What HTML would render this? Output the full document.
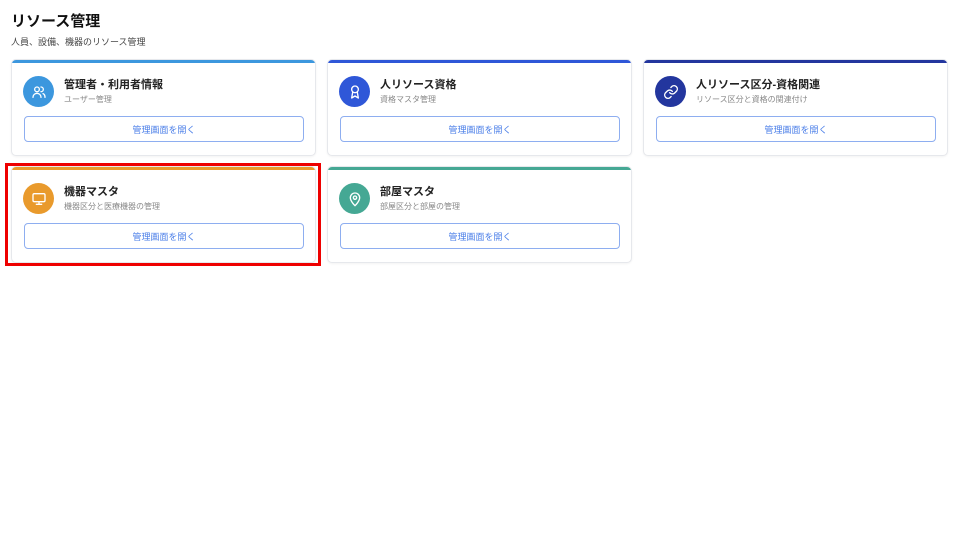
<!DOCTYPE html>
<html><head><meta charset="utf-8"><style>
*{box-sizing:border-box;margin:0;padding:0}
body{width:960px;height:540px;background:#fff;font-family:"Liberation Sans","Noto Sans CJK JP",sans-serif;position:relative;overflow:hidden;color:#1f2329}
h1{position:absolute;left:11px;top:10px;font-size:15px;font-weight:bold;color:#111}
.sub{position:absolute;left:11px;top:35px;font-size:9px;color:#444}
.card{position:absolute;width:305px;height:97px;background:#fff;border:1px solid #e6e8ec;border-radius:5px;box-shadow:0 1px 2px rgba(0,0,0,.05);overflow:hidden}
.bar{position:absolute;left:0;top:0;right:0;height:3px}
.ic{position:absolute;left:11px;top:16px;width:31px;height:31px;border-radius:50%;display:flex;align-items:center;justify-content:center}
.t{position:absolute;left:52px;top:16px;font-size:11px;font-weight:bold;color:#222}
.s{position:absolute;left:52px;top:34px;font-size:8px;color:#888}
.btn{position:absolute;left:12px;top:56px;width:280px;height:26px;border:1px solid #8eaef0;border-radius:4px;display:flex;align-items:center;justify-content:center;font-size:9px;color:#4a7ee8}
.red{position:absolute;left:5px;top:163px;width:316px;height:103px;border:3px solid #e00;z-index:2}
</style></head><body>
<h1>リソース管理</h1>
<div class="sub">人員、設備、機器のリソース管理</div>

<div class="card" style="left:11px;top:59px"><div class="bar" style="background:#3c97de"></div>
<div class="ic" style="background:#3c97de"><svg width="16" height="16" viewBox="0 0 24 24" fill="none" stroke="#fff" stroke-width="2" stroke-linecap="round"><circle cx="9" cy="8" r="3.5"/><path d="M3 20c0-3.5 2.7-6 6-6s6 2.5 6 6"/><path d="M15 4.5a3.5 3.5 0 010 7"/><path d="M18 14.5c2 .8 3 2.8 3 5.5"/></svg></div>
<div class="t">管理者・利用者情報</div><div class="s">ユーザー管理</div><div class="btn">管理画面を開く</div></div>

<div class="card" style="left:327px;top:59px"><div class="bar" style="background:#2f57d8"></div>
<div class="ic" style="background:#2f57d8"><svg width="16" height="16" viewBox="0 0 24 24" fill="none" stroke="#fff" stroke-width="2" stroke-linecap="round" stroke-linejoin="round"><circle cx="12" cy="8" r="5"/><path d="M8.5 12.5L7 21l5-3 5 3-1.5-8.5"/></svg></div>
<div class="t">人リソース資格</div><div class="s">資格マスタ管理</div><div class="btn">管理画面を開く</div></div>

<div class="card" style="left:643px;top:59px"><div class="bar" style="background:#23369e"></div>
<div class="ic" style="background:#23369e"><svg width="16" height="16" viewBox="0 0 24 24" fill="none" stroke="#fff" stroke-width="2" stroke-linecap="round"><path d="M10 13a5 5 0 007.5.5l3-3a5 5 0 00-7-7l-1.7 1.7"/><path d="M14 11a5 5 0 00-7.5-.5l-3 3a5 5 0 007 7l1.7-1.7"/></svg></div>
<div class="t">人リソース区分-資格関連</div><div class="s">リソース区分と資格の関連付け</div><div class="btn">管理画面を開く</div></div>

<div class="card" style="left:11px;top:166px"><div class="bar" style="background:#e99a2c"></div>
<div class="ic" style="background:#e99a2c"><svg width="16" height="16" viewBox="0 0 24 24" fill="none" stroke="#fff" stroke-width="2" stroke-linecap="round"><rect x="3" y="4" width="18" height="12" rx="2"/><path d="M8 20h8M12 16v4"/></svg></div>
<div class="t">機器マスタ</div><div class="s">機器区分と医療機器の管理</div><div class="btn">管理画面を開く</div></div>

<div class="card" style="left:327px;top:166px"><div class="bar" style="background:#45a894"></div>
<div class="ic" style="background:#45a894"><svg width="16" height="16" viewBox="0 0 24 24" fill="none" stroke="#fff" stroke-width="2" stroke-linecap="round"><path d="M12 22s7-6.5 7-12a7 7 0 00-14 0c0 5.5 7 12 7 12z"/><circle cx="12" cy="10" r="2.5"/></svg></div>
<div class="t">部屋マスタ</div><div class="s">部屋区分と部屋の管理</div><div class="btn">管理画面を開く</div></div>

<div class="red"></div>
</body></html>
